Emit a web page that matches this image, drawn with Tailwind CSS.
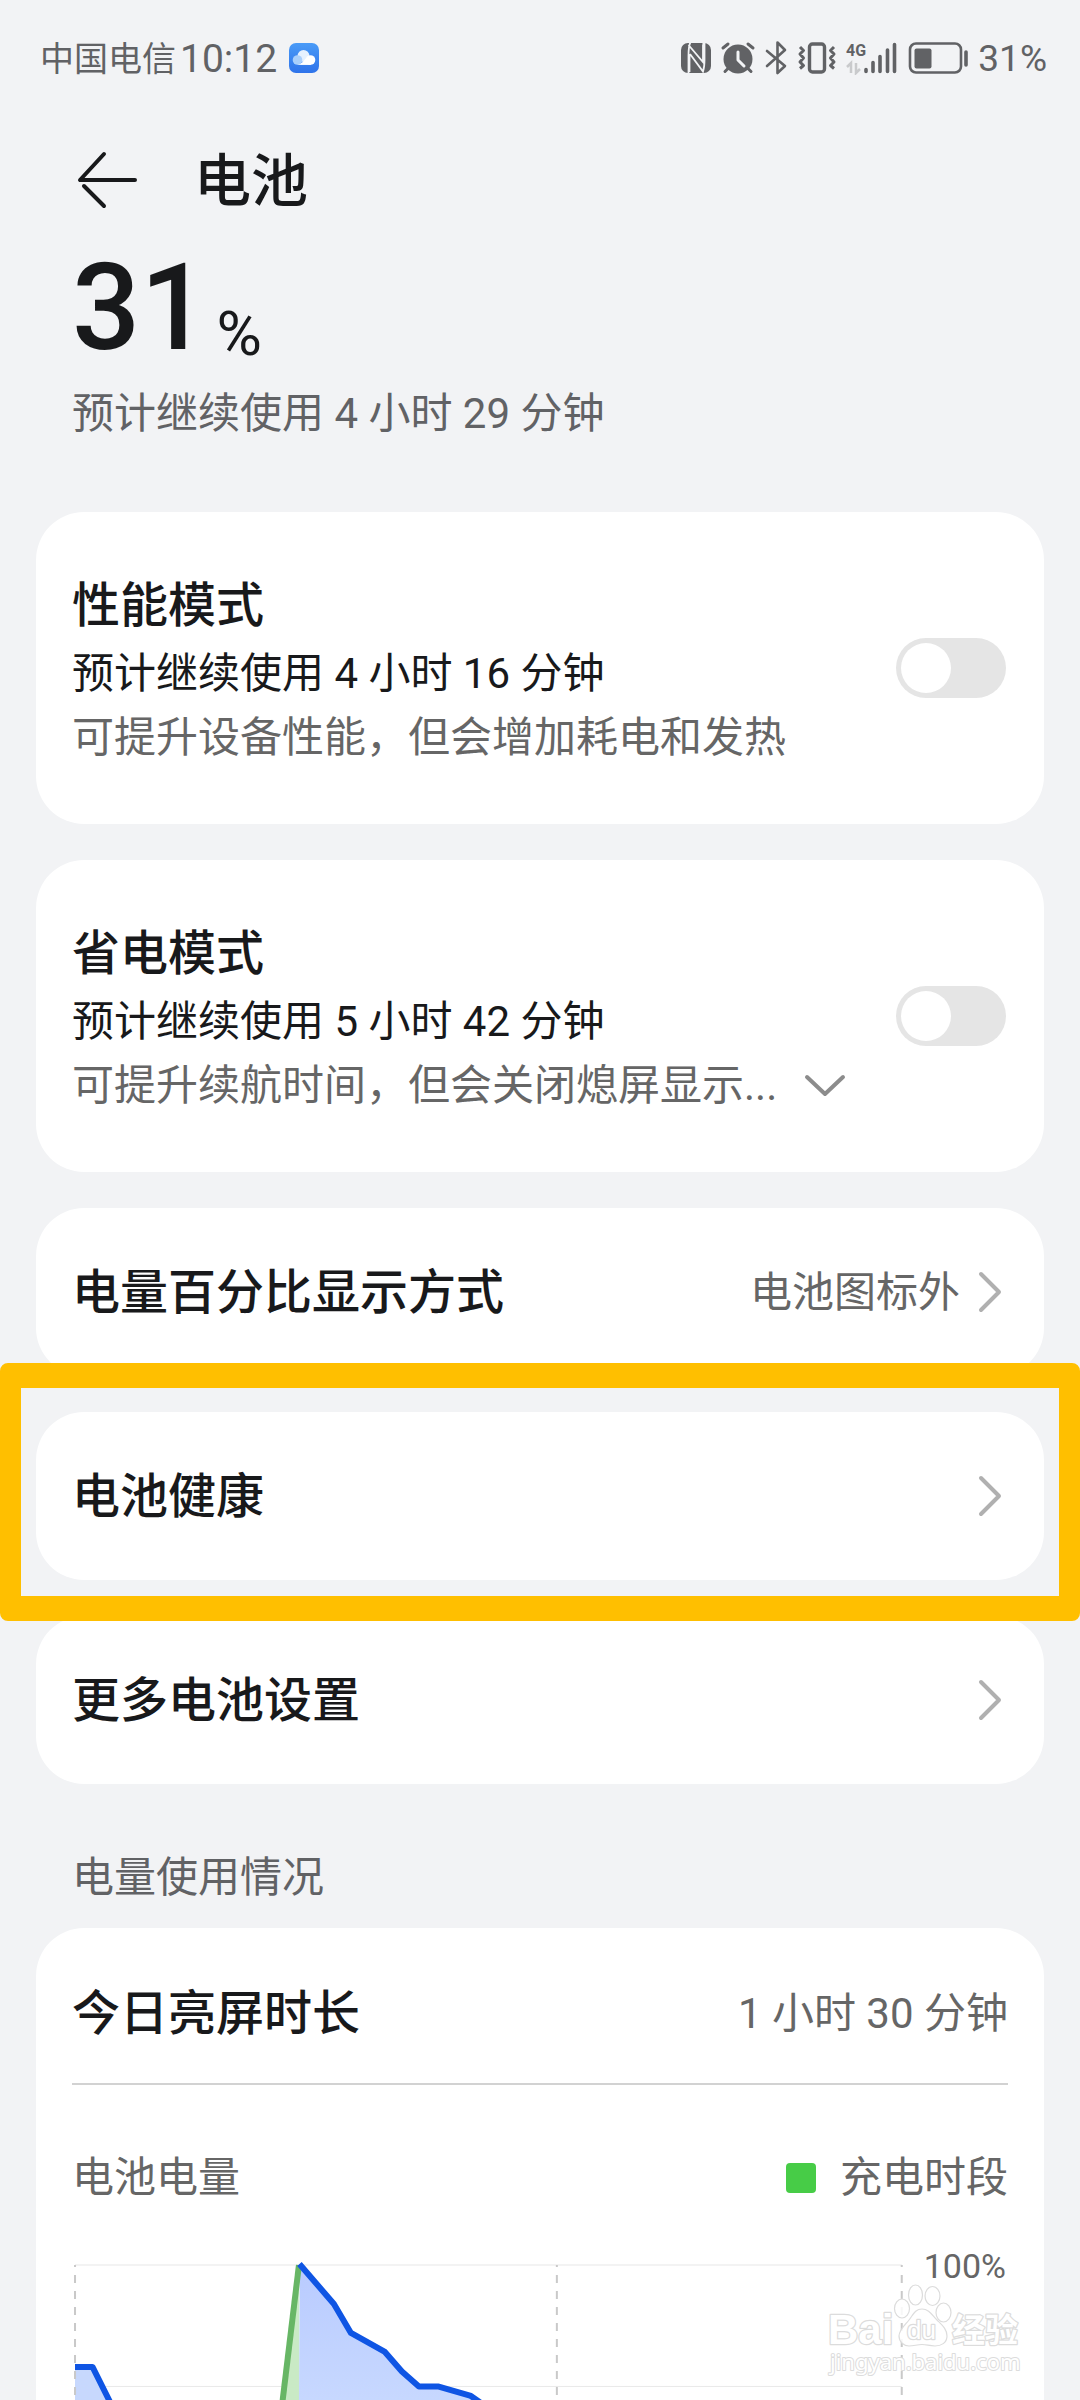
<!DOCTYPE html>
<html lang="zh-CN">
<head>
<meta charset="utf-8">
<meta name="viewport" content="width=device-width, initial-scale=1">
<title>电池</title>
<script src="https://cdn.jsdelivr.net/npm/@tailwindcss/browser@4"></script>
</head>
<body class="overflow-x-hidden bg-[#f2f3f5] font-['Roboto','Noto_Sans_CJK_SC',sans-serif] text-[#18191b]">

<!-- Status bar -->
<div class="flex h-[116px] items-center justify-between pl-10 pr-[33px] text-[#616265]">
  <div class="flex items-center">
    <span class="pt-[2px] text-[34px] leading-10">中国电信</span>
    <time class="ml-1 pt-[2px] text-[39px] leading-10">10:12</time>
    <svg class="ml-3 size-[30px]" viewBox="0 0 30 30" aria-hidden="true">
      <defs><linearGradient id="cloud" x1="0" y1="0" x2="0" y2="1"><stop offset="0" stop-color="#4a9bf7"/><stop offset="1" stop-color="#2f73ea"/></linearGradient></defs>
      <rect width="30" height="30" rx="7" fill="url(#cloud)"/>
      <circle cx="14.500" cy="13" r="6" fill="#e6f1fe"/>
      <circle cx="21.500" cy="17" r="4.800" fill="#fff"/>
      <path d="M8 21.800h13.500v-6z" fill="#fff"/>
      <circle cx="8.500" cy="17" r="4.800" fill="#a9cffb"/>
      <path d="M9 21.800c4 0 5-3 7-5.500s5-2 6 0v5.500z" fill="#fff"/>
    </svg>
  </div>
  <div class="flex items-center">
    <svg class="h-[34px] w-[288px]" viewBox="680 41 288 34" fill="none" stroke="#616265" aria-hidden="true">
      <!-- NFC -->
      <rect x="681" y="43" width="30" height="30" rx="7" fill="#616265" stroke="none"/>
      <path d="M690.500 42c-1.500 3-2 8-2 14v17M688.500 45l14.500 17V45M703.500 43l-.5 2M689.500 54v18M690 54l13 17.500c1-3 1.500-7 1.500-12V42" stroke="#f2f3f5" stroke-width="1.800"/>
      <!-- Alarm -->
      <circle cx="738" cy="59" r="14.500" fill="#616265" stroke="none"/>
      <path d="M723 48l5-4M753 48l-5-4M725 71.500l3-3M751 71.500l-3-3" stroke-width="3" stroke-linecap="round"/>
      <path d="M738 52v8l6 6" stroke="#f2f3f5" stroke-width="3" stroke-linecap="round" stroke-linejoin="round"/>
      <!-- Bluetooth -->
      <path d="M767 51l18 15-7.500 7V42.500l7.500 7.500-18 16" stroke-width="2.600" stroke-linecap="round" stroke-linejoin="round"/>
      <!-- Vibrate -->
      <rect x="809.500" y="44" width="15" height="28" rx="3" stroke-width="3.400"/>
      <path d="M800 47l3.500 3.500-3.500 3.500 3.500 4-3.500 4 3.500 3.500-3.500 3M834 47l-3.500 3.500 3.500 3.500-3.500 4 3.500 4-3.500 3.500 3.500 3" stroke-width="3" stroke-linejoin="round"/>
      <!-- Mobile data -->
      <text x="846" y="56" fill="#616265" stroke="none" font-family="Roboto" font-size="16" font-weight="700">4G</text>
      <path d="M847 67l4-4v10M856 63v10l4-4" stroke="#c9cacc" stroke-width="2.500"/>
      <path d="M866 69.500v2M873 62.500v9M880 56.500v15M887.500 50v21.500M894.500 44.500v27" stroke-width="3.600" stroke-linecap="round"/>
      <!-- Battery -->
      <rect x="910" y="43.500" width="51" height="29" rx="6" stroke-width="2.600"/>
      <rect x="914.500" y="48.500" width="17" height="20" rx="2" fill="#616265" stroke="none"/>
      <path d="M966 52v13" stroke-width="3.600" stroke-linecap="round"/>
    </svg>
    <span class="ml-[10px] pt-[2px] text-[37px] leading-10">31%</span>
  </div>
</div>

<!-- Title -->
<header class="flex h-32 items-center pl-[76px]">
  <button type="button" aria-label="返回">
    <svg class="h-[58px] w-[62px]" viewBox="0 0 62 58" fill="none" stroke="#18191b" stroke-width="4" stroke-linecap="round" stroke-linejoin="round" aria-hidden="true">
      <path d="M28 3L4 29h55M8 35l20 20"/>
    </svg>
  </button>
  <h1 class="ml-14 pt-1 text-[57px] font-medium leading-[64px]">电池</h1>
</header>

<!-- Current level -->
<section class="px-[72px]">
  <div class="flex h-32 items-end">
    <span class="text-[120px] font-medium leading-[128px]">31</span>
    <span class="ml-2 text-[62px] leading-[76px]">%</span>
  </div>
  <p class="mt-[10px] text-[42px] leading-[64px] text-[#616265]">预计继续使用 4 小时 29 分钟</p>
</section>

<main class="mt-[66px] flex flex-col gap-9 px-9">
  <section class="flex h-[312px] items-center justify-between rounded-[48px] bg-white pl-9 pr-[38px]">
    <div class="pt-1">
      <label for="perf" class="block text-[48px] font-medium leading-[72px]">性能模式</label>
      <p class="text-[42px] leading-[64px]">预计继续使用 4 小时 16 分钟</p>
      <p class="text-[42px] leading-[64px] text-[#666]">可提升设备性能，但会增加耗电和发热</p>
    </div>
    <input id="perf" type="checkbox" role="switch" class="h-[60px] w-[110px] shrink-0 appearance-none rounded-full bg-[#e5e5e5] p-[5px] before:block before:size-[50px] before:rounded-full before:bg-white checked:bg-[#0a59f7] checked:before:ml-auto">
  </section>

  <section class="flex h-[312px] items-center justify-between rounded-[48px] bg-white pl-9 pr-[38px]">
    <div class="pt-1">
      <label for="save" class="block text-[48px] font-medium leading-[72px]">省电模式</label>
      <p class="text-[42px] leading-[64px]">预计继续使用 5 小时 42 分钟</p>
      <div class="flex items-center gap-[26px]">
        <p class="text-[42px] leading-[64px] text-[#666]">可提升续航时间，但会关闭熄屏显示...</p>
        <button type="button" aria-label="展开">
          <svg class="h-6 w-11" viewBox="0 0 44 24" fill="none" stroke="#8c8c8c" stroke-width="4" stroke-linecap="round" stroke-linejoin="round" aria-hidden="true"><path d="M4 3l18 17L40 3"/></svg>
        </button>
      </div>
    </div>
    <input id="save" type="checkbox" role="switch" class="h-[60px] w-[110px] shrink-0 appearance-none rounded-full bg-[#e5e5e5] p-[5px] before:block before:size-[50px] before:rounded-full before:bg-white checked:bg-[#0a59f7] checked:before:ml-auto">
  </section>

  <a href="#percent" class="flex h-[168px] items-center rounded-[48px] bg-white pl-9 pr-[42px]">
    <span class="pt-[2px] text-[48px] font-medium leading-[72px]">电量百分比显示方式</span>
    <span class="ml-auto pt-[2px] text-[42px] leading-[64px] text-[#666]">电池图标外</span>
    <svg class="ml-[18px] h-11 w-6" viewBox="0 0 24 44" fill="none" stroke="#b0b0b0" stroke-width="4" stroke-linecap="round" stroke-linejoin="round" aria-hidden="true"><path d="M3 4l18 18L3 40"/></svg>
  </a>

  <div class="relative">
    <a href="#health" class="flex h-[168px] items-center justify-between rounded-[48px] bg-white pl-9 pr-[42px]">
      <span class="pt-[2px] text-[48px] font-medium leading-[72px]">电池健康</span>
      <svg class="h-11 w-6" viewBox="0 0 24 44" fill="none" stroke="#b0b0b0" stroke-width="4" stroke-linecap="round" stroke-linejoin="round" aria-hidden="true"><path d="M3 4l18 18L3 40"/></svg>
    </a>
    <!-- Highlight frame -->
    <div class="pointer-events-none absolute -inset-x-9 -bottom-[41px] -top-[49px] rounded-lg border-x-[21px] border-y-[25px] border-[#ffbf00]"></div>
  </div>

  <a href="#more" class="flex h-[168px] items-center justify-between rounded-[48px] bg-white pl-9 pr-[42px]">
    <span class="pt-[2px] text-[48px] font-medium leading-[72px]">更多电池设置</span>
    <svg class="h-11 w-6" viewBox="0 0 24 44" fill="none" stroke="#b0b0b0" stroke-width="4" stroke-linecap="round" stroke-linejoin="round" aria-hidden="true"><path d="M3 4l18 18L3 40"/></svg>
  </a>

  <section>
    <h2 class="px-9 pb-[18px] pt-[26px] text-[42px] leading-[64px] text-[#616265]">电量使用情况</h2>
    <div class="relative rounded-t-[48px] bg-white px-9">
      <div class="flex h-[157px] items-center justify-between border-b-2 border-[#d2d2d2] pt-4">
        <span class="text-[48px] font-medium leading-[72px]">今日亮屏时长</span>
        <span class="text-[42px] leading-[64px] text-[#666]">1 小时 30 分钟</span>
      </div>
      <div class="flex items-center pt-[61px] text-[42px] leading-[64px] text-[#666]">
        <span>电池电量</span>
        <span class="ml-auto size-[30px] rounded bg-[#47cc47]"></span>
        <span class="ml-6">充电时段</span>
      </div>
      <div class="mt-[50px] flex items-start">
        <svg class="min-w-0 flex-1" viewBox="72 2260 834 140" fill="none" role="img" aria-label="电池电量曲线">
          <defs>
            <linearGradient id="level" gradientUnits="userSpaceOnUse" x1="0" y1="2265" x2="0" y2="2400"><stop offset="0" stop-color="#b9cbff"/><stop offset="1" stop-color="#c7d8ff"/></linearGradient>
          </defs>
          <path d="M75 2265h827" stroke="#f3f3f3" stroke-width="2"/>
          <path d="M75 2386.500h827" stroke="#e9e9e9"/>
          <path d="M75 2367h17.500l17 33H75z" fill="#c7d8fd"/>
          <path d="M299.500 2265v135h-17z" fill="#c9eac5"/>
          <path d="M300 2265l34 39 17 29 34 19 17 19.500 17 15h19l33 9.500 8 5H299z" fill="url(#level)"/>
          <path d="M75 2265v135M557 2265v135M902 2265v135" stroke="#c9c9c9" stroke-width="2" stroke-dasharray="8 8" stroke-dashoffset="6"/>
          <path d="M282.500 2402L299 2265" stroke="#67b665" stroke-width="6"/>
          <path d="M75 2367h17.500l18 36M299.500 2264l34.500 40 17 29 34 19 17 19.500 17 15h19l33 9.500 10 7" stroke="#0f55e4" stroke-width="6" stroke-linejoin="round"/>
        </svg>
        <span class="ml-[18px] mr-[2px] text-[34px] leading-3 text-[#666]">100%</span>
      </div>
      <!-- Watermark -->
      <svg class="absolute bottom-[15px] right-5 h-[105px] w-[204px]" viewBox="820 2280 204 105" fill="#fff" fill-opacity=".85" stroke="#dcdcdc" aria-hidden="true">
        <g stroke-width="1.200">
          <ellipse cx="902" cy="2308.500" rx="7.500" ry="9.500"/>
          <ellipse cx="915.500" cy="2295" rx="7" ry="10"/>
          <ellipse cx="932.500" cy="2296" rx="7.500" ry="9.500"/>
          <ellipse cx="943.500" cy="2312.500" rx="7.500" ry="9.500"/>
          <path d="M922 2309c7 0 10 6 15 11s10 9 10 16-6 10-12 10-8-1.500-13-1.500-8 1.500-13 1.500-10-4-10-10 6-11 10-16 6-11 13-11z"/>
        </g>
        <g stroke-width="2.500" paint-order="stroke" stroke-linejoin="round" fill-opacity="1" font-weight="700">
          <text x="828" y="2344" font-family="Liberation Sans" font-size="42">Bai</text>
          <text x="907" y="2339" font-family="Liberation Sans" font-size="26" font-weight="400">du</text>
          <text x="952" y="2342" font-family="Noto Sans CJK SC" font-size="33">经验</text>
          <text x="830" y="2370" font-family="Noto Sans" font-size="22" font-weight="400" stroke-width="2">jingyan.baidu.com</text>
        </g>
      </svg>
    </div>
  </section>
</main>
</body>
</html>
